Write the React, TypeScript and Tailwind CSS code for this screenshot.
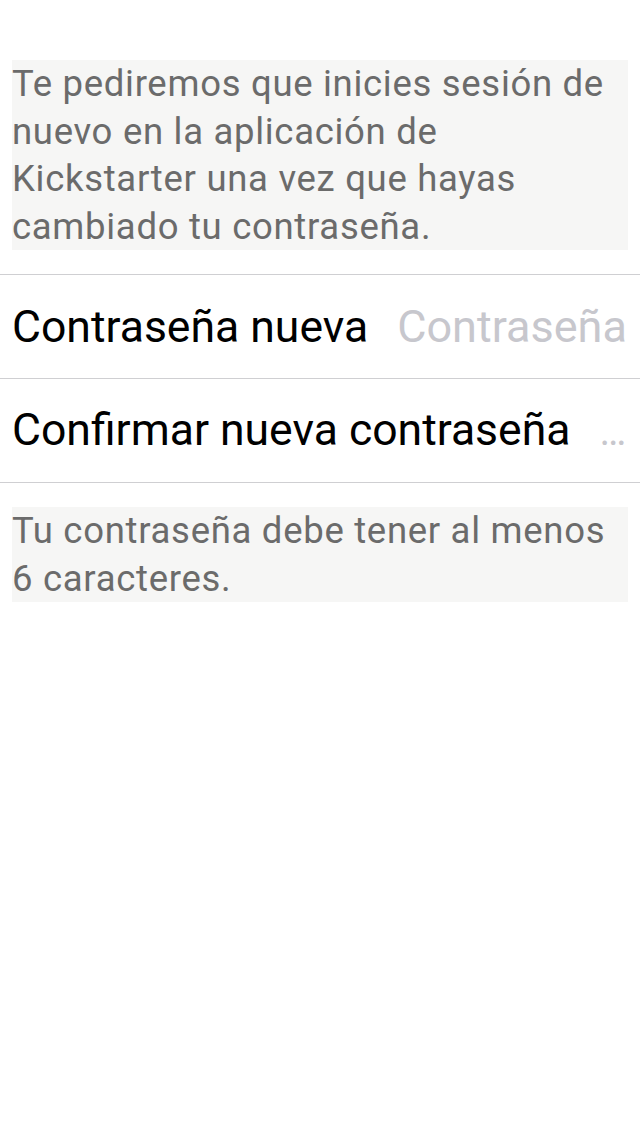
const font = { fontFamily: "Roboto, 'Liberation Sans', sans-serif" };

const Note = ({ children, className }: { children: string; className?: string }) => (
  <div className={`mx-3 bg-[#f6f6f5] text-[36.5px] leading-[47.5px] tracking-[0.7px] text-[#6b6b6b] ${className ?? ""}`}>
    {children}
  </div>
);

const FieldRow = ({
  label,
  placeholder,
  placeholderClassName,
}: {
  label: string;
  placeholder: string;
  placeholderClassName?: string;
}) => (
  <div className="flex h-[104px] items-center border-b border-[#cfcfd2] px-3">
    <div className="flex min-w-0 flex-1 items-baseline gap-[29px]">
      <span className="whitespace-nowrap text-[44.5px] text-black">{label}</span>
      <span className={`min-w-0 flex-1 truncate text-[#c7c7cd] ${placeholderClassName ?? "text-[45px]"}`}>
        {placeholder}
      </span>
    </div>
  </div>
);

export default function App() {
  return (
    <div className="min-h-[1136px] w-[640px] bg-white" style={font}>
      <div className="pt-[60px]">
        <Note>
          Te pediremos que inicies sesión de nuevo en la aplicación de Kickstarter una vez que hayas cambiado tu contraseña.
        </Note>
      </div>
      <div className="mt-6 border-t border-[#cfcfd2]">
        <FieldRow label="Contraseña nueva" placeholder="Contraseña" />
        <FieldRow label="Confirmar nueva contraseña" placeholder="…" placeholderClassName="text-[40px]" />
      </div>
      <Note className="mt-6">Tu contraseña debe tener al menos 6 caracteres.</Note>
    </div>
  );
}
